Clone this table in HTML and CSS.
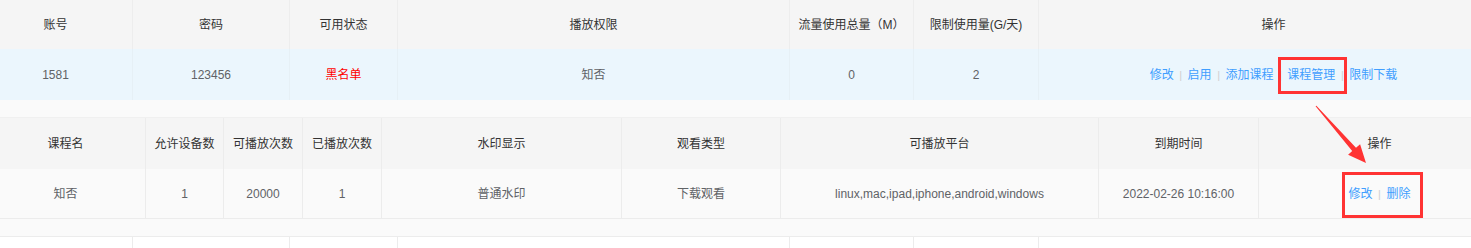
FILE: index.html
```html
<!DOCTYPE html>
<html lang="zh">
<head>
<meta charset="utf-8">
<link rel="stylesheet" href="styles.css">
</head>
<body>
<div class="page">
  <div class="outer">
    <div class="row head">
      <div class="cell">账号</div>
      <div class="cell">密码</div>
      <div class="cell">可用状态</div>
      <div class="cell">播放权限</div>
      <div class="cell">流量使用总量（M）</div>
      <div class="cell">限制使用量(G/天)</div>
      <div class="cell">操作</div>
    </div>
    <div class="row data active">
      <div class="cell">1581</div>
      <div class="cell">123456</div>
      <div class="cell red">黑名单</div>
      <div class="cell">知否</div>
      <div class="cell">0</div>
      <div class="cell">2</div>
      <div class="cell">
        <span class="links">
          <a class="link">修改</a><span class="sep">|</span><a class="link">启用</a><span class="sep">|</span><a class="link">添加课程</a><span class="sep">|</span><a class="link mark1">课程管理</a><span class="sep">|</span><a class="link">限制下载</a>
        </span>
      </div>
    </div>
    <div class="expand">
      <div class="inner">
        <div class="irow ihead">
          <div class="cell">课程名</div>
          <div class="cell">允许设备数</div>
          <div class="cell">可播放次数</div>
          <div class="cell">已播放次数</div>
          <div class="cell">水印显示</div>
          <div class="cell">观看类型</div>
          <div class="cell">可播放平台</div>
          <div class="cell">到期时间</div>
          <div class="cell">操作</div>
        </div>
        <div class="irow idata">
          <div class="cell">知否</div>
          <div class="cell">1</div>
          <div class="cell">20000</div>
          <div class="cell">1</div>
          <div class="cell">普通水印</div>
          <div class="cell">下载观看</div>
          <div class="cell">linux,mac,ipad,iphone,android,windows</div>
          <div class="cell">2022-02-26 10:16:00</div>
          <div class="cell">
            <span class="links mark2"><a class="link">修改</a><span class="sep">|</span><a class="link">删除</a></span>
          </div>
        </div>
      </div>
    </div>
    <div class="row next">
      <div class="cell"></div>
      <div class="cell"></div>
      <div class="cell"></div>
      <div class="cell"></div>
      <div class="cell"></div>
      <div class="cell"></div>
      <div class="cell"></div>
    </div>
  </div>
  <svg class="arrow" width="1471" height="248" viewBox="0 0 1471 248">
    <polygon points="1315.6,106.3 1352.2,151.1 1348.1,154.8 1366,163 1360.1,144.2 1356.0,147.8 1316.4,105.7" fill="#ff3333"/>
  </svg>
</div>
</body>
</html>
```

FILE: styles.css
```css
html, body {
  margin: 0;
  padding: 0;
  overflow: hidden;
  background: #ffffff;
}

.page {
  position: relative;
  width: 1471px;
  height: 248px;
  overflow: hidden;
  font-family: "Liberation Sans", "Noto Sans CJK SC", sans-serif;
  font-size: 12px;
  color: #606266;
}

.outer {
  margin-left: -21px;
  width: 1530px;
}

.row {
  display: grid;
  grid-template-columns: 154px 157px 108px 392px 124px 125px 470px;
}

.cell {
  box-sizing: border-box;
  border-right: 1px solid #ededed;
  display: flex;
  align-items: center;
  justify-content: center;
  white-space: nowrap;
  line-height: 16px;
}

.head {
  height: 49px;
  background: #f5f5f5;
  color: #333333;
}

.data {
  height: 51px;
}

.active {
  background: #ebf6fd;
}

.active .cell {
  border-right-color: #e6f0f6;
}

.red {
  color: #ff0000;
}

.links {
  display: inline-flex;
  align-items: center;
  position: relative;
}

.link {
  color: #409eff;
  cursor: pointer;
  position: relative;
}

.sep {
  color: #d0d0d0;
  font-size: 11px;
  margin: 0 5.5px;
}

.mark1::after {
  content: "";
  position: absolute;
  left: -9px;
  top: -10px;
  width: 69px;
  height: 37px;
  box-sizing: border-box;
  border: 3px solid #ff3333;
}

.mark2::after {
  content: "";
  position: absolute;
  left: -7px;
  top: -14px;
  width: 81px;
  height: 46px;
  box-sizing: border-box;
  border: 3px solid #ff3333;
}

.expand {
  background: #fafafa;
  padding: 17px 0 17px 7px;
}

.irow {
  display: grid;
  grid-template-columns: 160px 78px 79px 79px 240px 159px 318px 160px 242px;
}

.ihead {
  height: 52px;
  background: #f5f5f5;
  color: #333333;
  border-top: 1px solid #f0f0f0;
  box-sizing: border-box;
}

.idata {
  height: 50px;
  background: #fafafa;
  border-bottom: 1px solid #ececec;
  box-sizing: border-box;
}

.ihead .cell,
.idata .cell {
  border-right-color: #ececec;
}

.next {
  height: 20px;
  background: #ffffff;
  border-top: 1px solid #ececec;
}

.next .cell {
  border-right-color: #ececec;
}

.arrow {
  position: absolute;
  left: 0;
  top: 0;
  pointer-events: none;
}
```
